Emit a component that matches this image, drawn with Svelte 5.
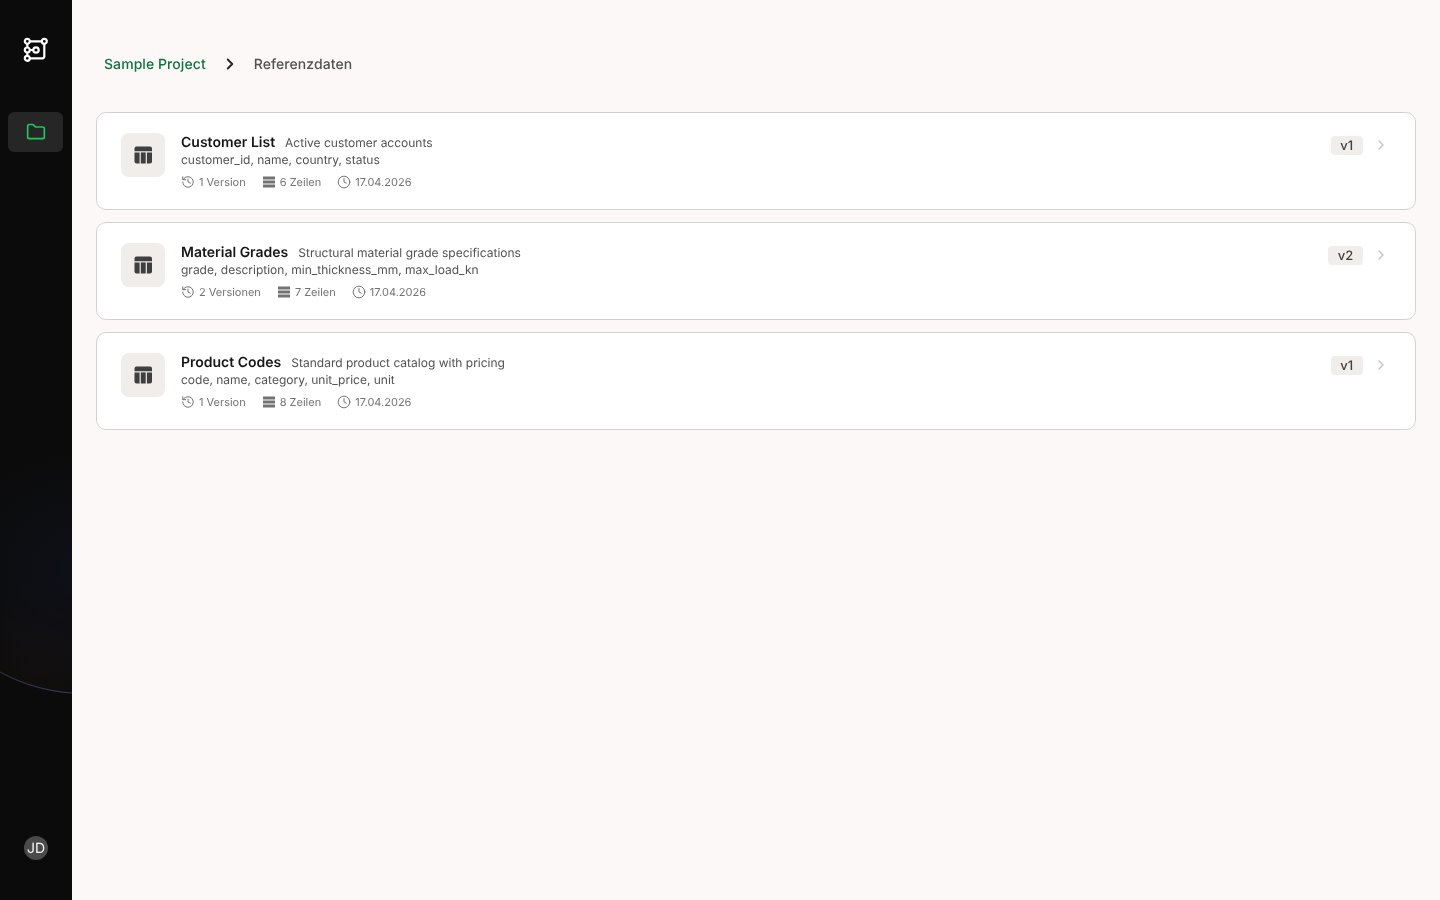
<script>
	const tables = [
		{ name: 'Customer List', description: 'Active customer accounts', columns: 'customer_id, name, country, status', versions: '1 Version', rows: '6 Zeilen', date: '17.04.2026', tag: 'v1' },
		{ name: 'Material Grades', description: 'Structural material grade specifications', columns: 'grade, description, min_thickness_mm, max_load_kn', versions: '2 Versionen', rows: '7 Zeilen', date: '17.04.2026', tag: 'v2' },
		{ name: 'Product Codes', description: 'Standard product catalog with pricing', columns: 'code, name, category, unit_price, unit', versions: '1 Version', rows: '8 Zeilen', date: '17.04.2026', tag: 'v1' }
	];
</script>

<div class="shell">
	<aside class="rail">
		<svg class="glow" width="72" height="900" viewBox="0 0 72 900" aria-hidden="true">
			<defs>
				<radialGradient id="tint" cx="72" cy="570" r="120" gradientUnits="userSpaceOnUse">
					<stop offset="0" stop-color="#0e1018" />
					<stop offset="1" stop-color="#0e1018" stop-opacity="0" />
				</radialGradient>
				<radialGradient id="warm" cx="40" cy="660" r="80" gradientUnits="userSpaceOnUse">
					<stop offset="0" stop-color="#140f0f" />
					<stop offset="1" stop-color="#140f0f" stop-opacity="0" />
				</radialGradient>
				<linearGradient id="arc" x1="0" x2="1" y1="0" y2="0">
					<stop offset="0" stop-color="#2a2c33" />
					<stop offset="1" stop-color="#333a55" />
				</linearGradient>
			</defs>
			<path d="M0 672C22 684 46 691 72 693V400H0Z" fill="url(#warm)" />
			<path d="M0 672C22 684 46 691 72 693V400H0Z" fill="url(#tint)" />
			<path d="M0 672C22 684 46 691 72 693" fill="none" stroke="url(#arc)" stroke-width="1.2" />
		</svg>

		<svg class="logo" width="26" height="26" viewBox="0 0 26 26" fill="none" stroke="#fff" stroke-width="2.200" aria-hidden="true">
			<path d="M7 4.300h11.600M21.300 7v12.300a2 2 0 0 1-2 2H7M4.300 7v3.300M4.300 15.700v3M7 13h3.300" />
			<circle cx="4.300" cy="4.300" r="2.500" />
			<circle cx="21.300" cy="4.300" r="2.500" />
			<circle cx="4.300" cy="13" r="2.500" />
			<circle cx="13" cy="13" r="2.700" />
			<circle cx="4.300" cy="21.300" r="2.500" />
		</svg>

		<button class="nav-item" type="button" aria-label="Projekte">
			<svg width="20" height="20" viewBox="0 0 24 24" fill="none" stroke="#22c55e" stroke-width="2" stroke-linejoin="round">
				<path d="M20 20a2 2 0 0 0 2-2V8a2 2 0 0 0-2-2h-7.900a2 2 0 0 1-1.700-.9l-.8-1.200A2 2 0 0 0 7.900 3H4a2 2 0 0 0-2 2v13a2 2 0 0 0 2 2Z" />
			</svg>
		</button>

		<div class="avatar">JD</div>
	</aside>

	<main class="content">
		<nav class="crumbs">
			<span class="crumb-link">Sample Project</span>
			<svg width="18" height="18" viewBox="0 0 24 24" fill="none" stroke="#27272a" stroke-width="2.600" stroke-linecap="round" stroke-linejoin="round" aria-hidden="true">
				<path d="m9 18 6-6-6-6" />
			</svg>
			<span class="crumb-current">Referenzdaten</span>
		</nav>

		<div class="list">
			{#each tables as table}
				<article class="card">
					<div class="thumb">
						<svg width="20" height="20" viewBox="0 0 20 20" fill="#3f3f3f" aria-hidden="true">
							<path d="M3.500 1.500h13.500a2 2 0 0 1 2 2v2.800H1.500V3.500a2 2 0 0 1 2-2Z" />
							<path d="M1.500 7.400h5.100v11.100H3.500a2 2 0 0 1-2-2Z" />
							<rect x="7.800" y="7.400" width="4.900" height="11.100" />
							<path d="M13.900 7.400h5.100v9.100a2 2 0 0 1-2 2h-3.100Z" />
						</svg>
					</div>
					<div class="body">
						<div class="heading">
							<h3>{table.name}</h3>
							<span class="description">{table.description}</span>
						</div>
						<p class="columns">{table.columns}</p>
						<div class="meta">
							<span class="meta-item">
								<svg width="14" height="14" viewBox="0 0 24 24" fill="none" stroke="currentColor" stroke-width="1.700" stroke-linecap="round" stroke-linejoin="round" aria-hidden="true">
									<path d="M3 12a9 9 0 1 0 9-9 9.750 9.750 0 0 0-6.740 2.740L3 8" />
									<path d="M3 3v5h5" />
									<path d="M12 7v5l4 2" />
								</svg>
								{table.versions}
							</span>
							<span class="meta-item">
								<svg width="14" height="14" viewBox="0 0 14 14" fill="currentColor" aria-hidden="true">
									<rect x="1" y="1.500" width="12" height="3" />
									<rect x="1" y="5.500" width="12" height="3" />
									<rect x="1" y="9.500" width="12" height="3" />
								</svg>
								{table.rows}
							</span>
							<span class="meta-item">
								<svg width="14" height="14" viewBox="0 0 24 24" fill="none" stroke="currentColor" stroke-width="1.700" stroke-linecap="round" stroke-linejoin="round" aria-hidden="true">
									<circle cx="12" cy="12" r="10" />
									<path d="M12 6v6l4 2" />
								</svg>
								{table.date}
							</span>
						</div>
					</div>
					<div class="aside">
						<span class="tag">{table.tag}</span>
						<svg class="go" width="16" height="16" viewBox="0 0 24 24" fill="none" stroke="#c4c4c4" stroke-width="2" stroke-linecap="round" stroke-linejoin="round" aria-hidden="true">
							<path d="m9 18 6-6-6-6" />
						</svg>
					</div>
				</article>
			{/each}
		</div>
	</main>
</div>

<style>
	:global(body) {
		background: #fcf8f7;
		font-family: Inter, 'Liberation Sans', sans-serif;
		text-rendering: geometricPrecision;
	}

	.shell {
		display: flex;
		min-height: 900px;
		will-change: transform;
	}

	.rail {
		position: relative;
		flex: 0 0 72px;
		display: flex;
		flex-direction: column;
		align-items: center;
		background: #0b0b0b;
		overflow: hidden;
	}

	.glow {
		position: absolute;
		inset: 0;
	}

	.logo {
		position: relative;
		margin-top: 37px;
	}

	.nav-item {
		position: relative;
		display: flex;
		align-items: center;
		justify-content: center;
		width: 55px;
		height: 40px;
		margin-top: 49px;
		margin-left: -1px;
		padding: 0;
		border: 0;
		border-radius: 6px;
		background: #262626;
	}

	.avatar {
		position: relative;
		display: flex;
		align-items: center;
		justify-content: center;
		width: 24px;
		height: 24px;
		margin-top: auto;
		margin-bottom: 40px;
		border-radius: 50%;
		background: #4a4a4a;
		color: #f5f5f5;
		font-size: 14px;
	}

	.content {
		flex: 1;
		min-width: 0;
		padding: 52px 24px 0;
	}

	.crumbs {
		display: flex;
		align-items: center;
		gap: 15px;
		height: 24px;
		padding-left: 8px;
		font-size: 14px;
		font-weight: 500;
		line-height: 24px;
		letter-spacing: 0.07px;
	}

	.crumb-link {
		margin-top: 2px;
		color: #0f7340;
	}

	.crumb-current {
		margin-top: 2px;
		color: #525252;
	}

	.list {
		display: flex;
		flex-direction: column;
		gap: 12px;
		margin-top: 36px;
	}

	.card {
		display: flex;
		align-items: flex-start;
		gap: 16px;
		height: 98px;
		box-sizing: border-box;
		padding: 20px 24px;
		border: 1px solid #d4d2d0;
		border-radius: 10px;
		background: #fff;
	}

	.thumb {
		flex: none;
		display: flex;
		align-items: center;
		justify-content: center;
		width: 44px;
		height: 44px;
		border-radius: 8px;
		background: #f1edeb;
	}

	.body {
		flex: 1;
		min-width: 0;
	}

	.heading {
		display: flex;
		align-items: baseline;
		gap: 10px;
		height: 19px;
		padding-top: 1px;
		box-sizing: border-box;
	}

	h3 {
		margin: 0;
		color: #171717;
		font-size: 14px;
		font-weight: 600;
		line-height: 18px;
	}

	.description {
		color: #525252;
		font-size: 12px;
	}

	.columns {
		margin: 0;
		color: #525252;
		font-size: 12px;
		line-height: 16px;
	}

	.meta {
		display: flex;
		gap: 16px;
		margin-top: 6px;
		color: #737373;
		font-size: 11px;
		line-height: 16px;
	}

	.meta-item {
		display: flex;
		align-items: center;
		gap: 4px;
	}

	.aside {
		display: flex;
		align-items: center;
		gap: 10px;
		margin-right: 2px;
		margin-top: 3px;
	}

	.tag {
		padding: 1px 9.8px 0;
		border-radius: 4px;
		background: #f1edeb;
		color: #404040;
		font-size: 13px;
		font-weight: 500;
		line-height: 18px;
	}

	.go {
		margin-top: -2px;
	}
</style>
